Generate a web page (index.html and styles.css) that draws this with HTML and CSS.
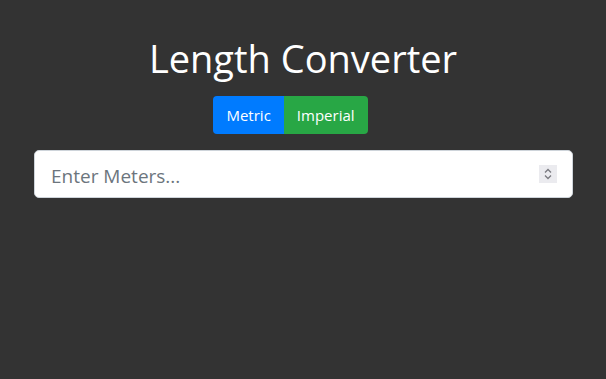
FILE: index.html
```html
<!DOCTYPE html>
<html lang="en">
<head>
    <meta charset="UTF-8">
    <meta name="viewport" content="width=device-width, initial-scale=1.0">
    <title>Length Converter</title>
    <link rel="stylesheet" href="styles.css">
</head>
<body>
    <div class="container">
        <h1>Length Converter</h1>
        <div class="btn-group">
            <button type="button" class="btn btn-metric">Metric</button>
            <button type="button" class="btn btn-imperial">Imperial</button>
        </div>
        <div class="input-wrap">
            <input type="number" class="form-input" placeholder="Enter Meters...">
            <span class="spinner">
                <svg width="18" height="18" viewBox="0 0 18 18">
                    <path d="M6 7.5 L9 4.5 L12 7.5" fill="none" stroke="#7a7a80" stroke-width="1.3"/>
                    <path d="M6 10.5 L9 13.5 L12 10.5" fill="none" stroke="#7a7a80" stroke-width="1.3"/>
                </svg>
            </span>
        </div>
    </div>
</body>
</html>
```

FILE: styles.css
```css
* {
    margin: 0;
    padding: 0;
    box-sizing: border-box;
}

body {
    font-family: "Open Sans", "Noto Sans", Arial, sans-serif;
    background: #333;
    color: #fff;
    line-height: 1.5;
}

.container {
    max-width: 540px;
    margin: 0 auto;
    padding-top: 36px;
    display: flex;
    flex-direction: column;
    align-items: center;
}

.container h1 {
    font-size: 38px;
    font-weight: 400;
    line-height: 1.2;
    margin-bottom: 14px;
}

.btn-group {
    display: flex;
    margin-right: 25px;
    margin-bottom: 16px;
}

.btn {
    font-family: inherit;
    font-size: 15px;
    color: #fff;
    border: none;
    height: 38px;
    padding: 0 13px;
    cursor: pointer;
}

.btn-metric {
    background: #007bff;
    border-radius: 4px 0 0 4px;
}

.btn-imperial {
    background: #28a745;
    border-radius: 0 4px 4px 0;
}

.input-wrap {
    position: relative;
    width: 100%;
    padding-left: 1px;
}

.form-input {
    width: 100%;
    height: 48px;
    padding: 4px 16px 0;
    font-family: inherit;
    font-size: 19px;
    color: #495057;
    background: #fff;
    border: 1px solid #ced4da;
    border-radius: 5px;
}

.form-input::placeholder {
    color: #6c757d;
}

.form-input::-webkit-inner-spin-button,
.form-input::-webkit-outer-spin-button {
    -webkit-appearance: none;
    margin: 0;
}

.spinner {
    position: absolute;
    right: 16px;
    top: 15px;
    width: 18px;
    height: 18px;
    background: #ebebef;
    display: flex;
}
```
